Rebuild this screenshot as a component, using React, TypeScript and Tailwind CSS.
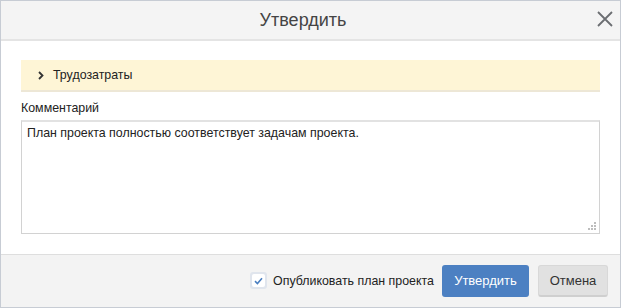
import { useState } from "react";

function CloseIcon() {
  return (
    <svg width="16" height="16" viewBox="0 0 16 16" fill="none">
      <path d="M1 1L15 15M15 1L1 15" stroke="#6b6e72" strokeWidth="1.8" />
    </svg>
  );
}

function Chevron() {
  return (
    <svg width="6" height="9" viewBox="0 0 6 9" fill="none">
      <path d="M1 1L4.5 4.5L1 8" stroke="#333" strokeWidth="1.8" />
    </svg>
  );
}

function Grip() {
  return (
    <svg width="9" height="9" viewBox="0 0 9 9" className="absolute right-[3px] bottom-[3px]">
      <rect x="6" y="0" width="2" height="2" fill="#bdbdbd" />
      <rect x="3" y="3" width="2" height="2" fill="#bdbdbd" />
      <rect x="6" y="3" width="2" height="2" fill="#bdbdbd" />
      <rect x="0" y="6" width="2" height="2" fill="#bdbdbd" />
      <rect x="3" y="6" width="2" height="2" fill="#bdbdbd" />
      <rect x="6" y="6" width="2" height="2" fill="#bdbdbd" />
    </svg>
  );
}

export default function App() {
  const [publish, setPublish] = useState(true);

  return (
    <div className="w-[621px] h-[308px] bg-white font-['Liberation_Sans',Arial,sans-serif] text-[12.4px] text-[#222]">
      <div className="flex flex-col h-full border border-[#c7ccd4]">
        <div className="relative flex items-center justify-center h-[40px] pr-[15px] bg-[#f4f4f4] border-b-2 border-[#e4e4e4]">
          <h1 className="text-[18px] text-[#444]">Утвердить</h1>
          <button className="absolute right-[7px] top-[10px]">
            <CloseIcon />
          </button>
        </div>

        <div className="flex flex-col px-5 pt-[19px] pb-5 flex-1">
          <div className="flex items-center gap-[9px] h-[32px] pl-[17px] bg-[#fef5d6] border-b-2 border-[#ede7d6]">
            <Chevron />
            <span>Трудозатраты</span>
          </div>
          <label className="mt-[8px] mb-[4px] leading-[16px]">Комментарий</label>
          <div className="relative flex-1">
            <textarea
              className="w-full h-full resize-none border border-[#d2d2d2] border-t-2 border-t-[#e2e2e2] px-[5px] pt-[3px] outline-none leading-[16px]"
              defaultValue="План проекта полностью соответствует задачам проекта."
            />
            <Grip />
          </div>
        </div>

        <div className="flex items-center justify-end h-[53px] pr-[12px] bg-[#f3f3f3] border-t border-[#dedede]">
          <label className="flex items-center gap-[6px] mr-[8px] cursor-pointer">
            <span
              className="flex items-center justify-center w-[17px] h-[17px] rounded-[3px] bg-[#e0e5ed]"
              onClick={() => setPublish(!publish)}
            >
              <span className="flex items-center justify-center w-[13px] h-[13px] rounded-[2px] bg-white">
                {publish && (
                  <svg width="9" height="8" viewBox="0 0 9 8" fill="none">
                    <path d="M1 4.2L3.4 6.5L8 1.2" stroke="#4a7fc1" strokeWidth="1.6" />
                  </svg>
                )}
              </span>
            </span>
            <span className="text-[#222]">Опубликовать план проекта</span>
          </label>
          <button className="h-[32px] w-[87px] rounded-[3px] bg-[#4c80c2] text-white text-[13px]">
            Утвердить
          </button>
          <button className="h-[32px] w-[70px] ml-[9px] rounded-[3px] bg-[#e1e1e1] border border-[#d8d8d8] border-b-2 border-b-[#cfcfcf] text-[#333] text-[13px]">
            Отмена
          </button>
        </div>
      </div>
    </div>
  );
}
